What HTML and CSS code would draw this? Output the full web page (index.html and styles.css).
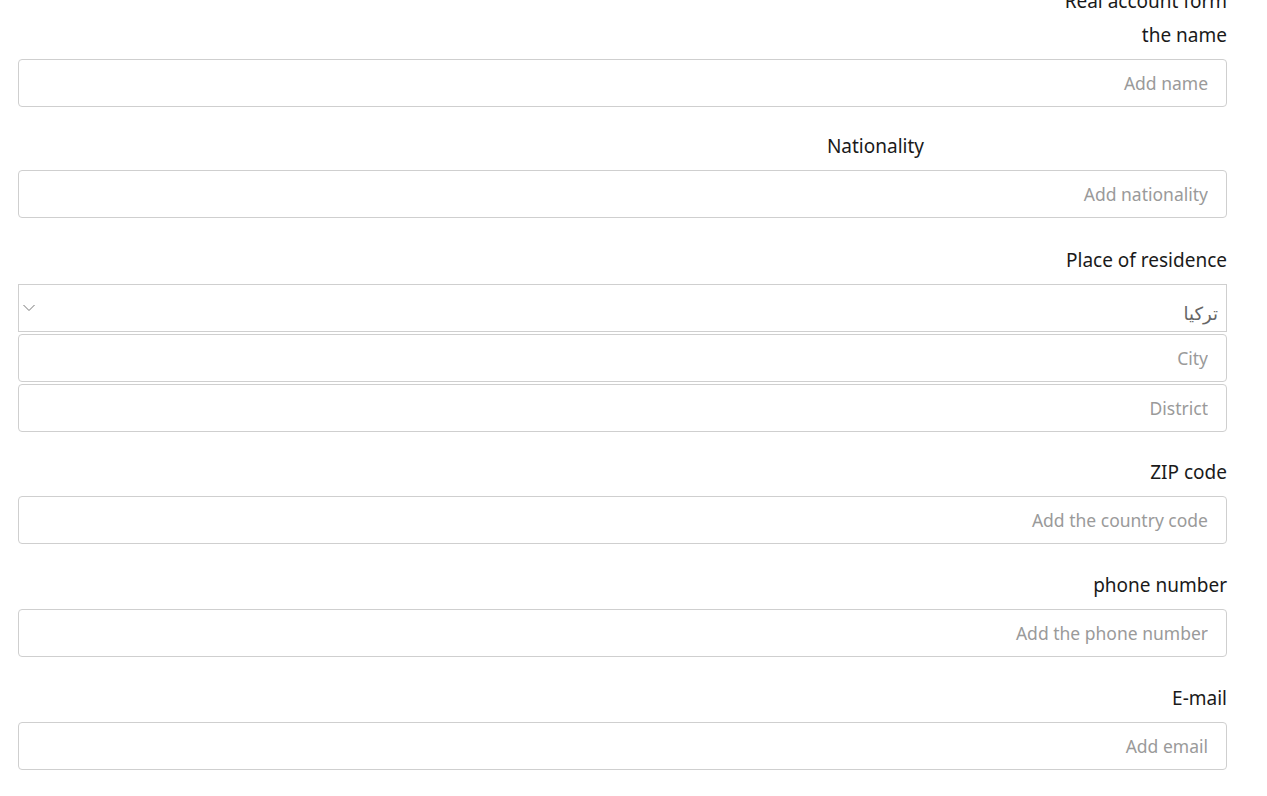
FILE: index.html
```html
<!DOCTYPE html>
<html lang="en">
<head>
<meta charset="utf-8">
<title>Real account form</title>
<link rel="stylesheet" href="styles.css">
</head>
<body>
<div class="page">
  <h2 class="title">Real account form</h2>
  <div class="group group-first">
    <label class="label">the name</label>
    <input class="field" type="text" placeholder="Add name">
  </div>
  <div class="group group-wide">
    <label class="label label-offset">Nationality</label>
    <input class="field" type="text" placeholder="Add nationality">
  </div>
  <div class="group group-residence">
    <label class="label">Place of residence</label>
    <div class="stack">
      <div class="select field">
        <span class="select-value">تركيا</span>
        <svg class="chev" width="12" height="8" viewBox="0 0 12 8"><path d="M0.5 1 L6 6.5 L11.5 1" fill="none" stroke="#777" stroke-width="1"/></svg>
      </div>
      <input class="field" type="text" placeholder="City">
      <input class="field" type="text" placeholder="District">
    </div>
  </div>
  <div class="group">
    <label class="label">ZIP code</label>
    <input class="field" type="text" placeholder="Add the country code">
  </div>
  <div class="group">
    <label class="label">phone number</label>
    <input class="field" type="text" placeholder="Add the phone number">
  </div>
  <div class="group">
    <label class="label">E-mail</label>
    <input class="field" type="text" placeholder="Add email">
  </div>
</div>
</body>
</html>
```
FILE: styles.css
```css
html, body {
  margin: 0;
  padding: 0;
  background: #fff;
  overflow: hidden;
}
body {
  font-family: "Noto Sans", "DejaVu Sans", sans-serif;
  color: #1a1a1a;
}
.page {
  padding: 0 40px 0 18px;
  display: flex;
  flex-direction: column;
}
.title {
  margin: -11px 0 10px 0;
  font-size: 19px;
  font-weight: 400;
  line-height: 24px;
  height: 24px;
  text-align: right;
}
.group {
  display: flex;
  flex-direction: column;
  margin-bottom: 29px;
}
.group-first {
  margin-bottom: 27px;
}
.group-wide {
  margin-bottom: 30px;
}
.group-residence {
  margin-bottom: 28px;
}
.label {
  display: block;
  font-size: 19px;
  line-height: 24px;
  text-align: right;
  margin-bottom: 12px;
}
.label-offset {
  padding-right: 303px;
}
.field {
  box-sizing: border-box;
  height: 48px;
  width: 100%;
  border: 1px solid #cfcfcf;
  border-radius: 4px;
  background: #fff;
  padding: 0 18px;
  font-family: "Noto Sans", "DejaVu Sans", sans-serif;
  font-size: 17.5px;
  color: #555;
  text-align: right;
  direction: ltr;
  outline: none;
  margin: 0;
}
.field::placeholder {
  color: #9a9a9a;
}
.stack {
  display: flex;
  flex-direction: column;
  gap: 2px;
}
.select {
  display: flex;
  align-items: center;
  justify-content: space-between;
  flex-direction: row-reverse;
  padding: 0 8px 0 4px;
  border-radius: 0;
}
.select-value {
  font-family: "DejaVu Sans", sans-serif;
  font-size: 18px;
  color: #666;
  padding-top: 10px;
}
.chev {
  margin-bottom: 1px;
}
```
